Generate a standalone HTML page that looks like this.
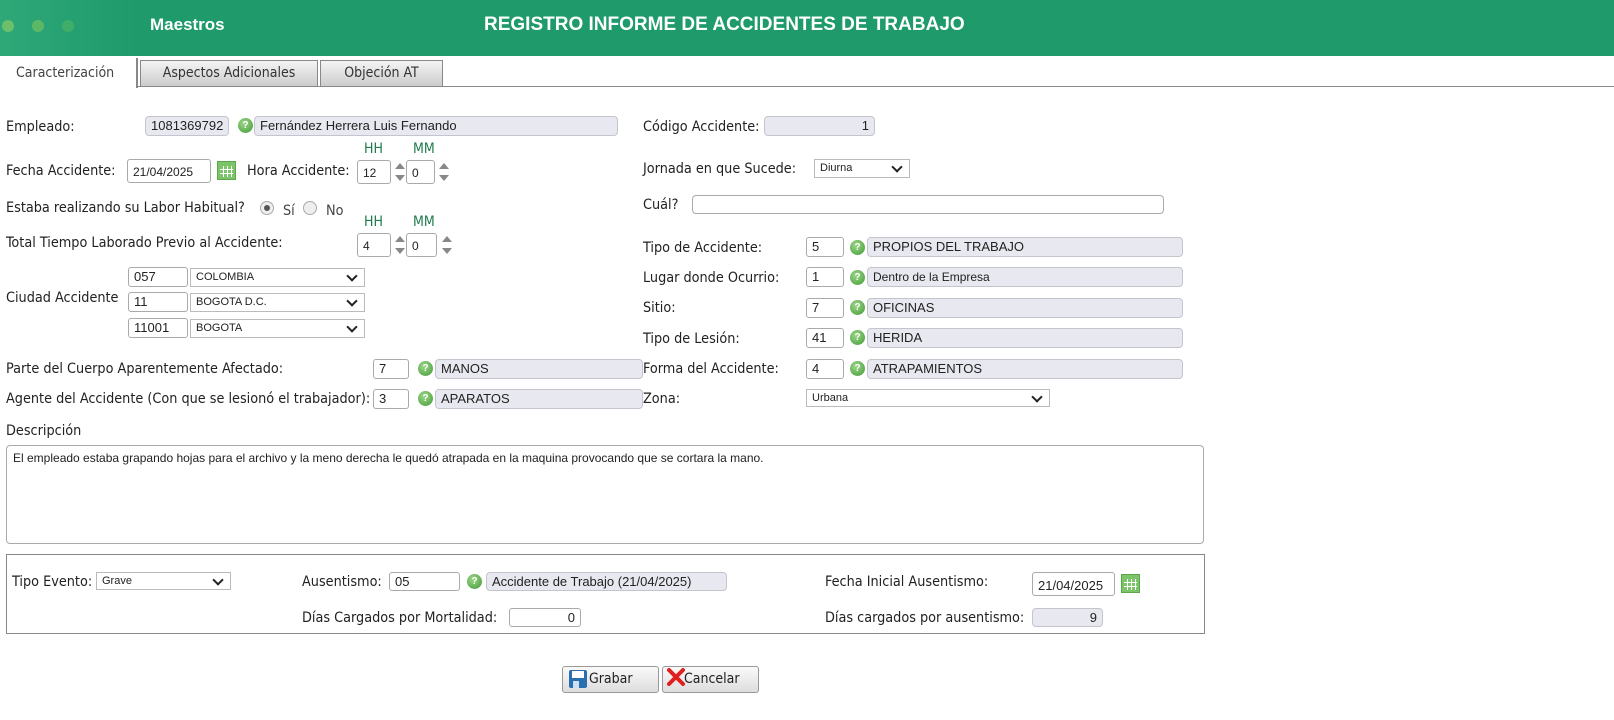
<!DOCTYPE html>
<html><head><meta charset="utf-8"><style>
*{box-sizing:border-box}
body{margin:0;width:1614px;height:720px;background:#fff;font-family:"DejaVu Sans Condensed","Liberation Sans",sans-serif;font-size:14px;color:#222;position:relative;overflow:hidden}
.a{position:absolute;white-space:nowrap}
.l{position:absolute;white-space:nowrap;font-size:14.3px;line-height:16px;transform:translateY(-7px);z-index:2}
.i{position:absolute;border:1px solid #aaa;background:#fff;font-family:"Liberation Sans",sans-serif;font-size:12px;padding:3px 5px;line-height:14px;border-radius:3px}
.r{position:absolute;border:1px solid #c4c4cc;background:#e8e8f0;font-family:"Liberation Sans",sans-serif;font-size:13px;padding:1px 5px;line-height:16px;border-radius:4px}
.s{position:absolute;border:1px solid #bbb;background:#fff;font-family:"Liberation Sans",sans-serif;font-size:11px;padding:2px 5px;line-height:13px}
.s:after{content:"";position:absolute;right:8px;top:3px;width:6px;height:6px;border-right:2px solid #222;border-bottom:2px solid #222;transform:rotate(45deg)}
.h{position:absolute;width:15px;height:15px;border-radius:50%;background:radial-gradient(circle at 40% 35%,#9ed68a,#3f9a34);color:#fff;font:bold 10px "Liberation Sans",sans-serif;text-align:center;line-height:15px}
.c{position:absolute;width:19px;height:19px;border:1px solid #5aa84a;background:#7cc46a}
.c:before{content:"";position:absolute;left:2px;top:4px;width:13px;height:11px;background:repeating-linear-gradient(90deg,transparent 0 3px,#fff 3px 4px),repeating-linear-gradient(0deg,transparent 0 3px,#fff 3px 4px)}
.sp{position:absolute;width:10px;height:22px}
.sp:before{content:"";position:absolute;left:0;top:2px;border:5px solid transparent;border-bottom:6px solid #888;border-top:0}
.sp:after{content:"";position:absolute;left:0;bottom:2px;border:5px solid transparent;border-top:6px solid #888;border-bottom:0}
.g{position:absolute;color:#1e7a4c;font-size:14px}
.rad{position:absolute;width:14px;height:14px;border-radius:50%;border:1px solid #aaa;background:#eee}
.btn{position:absolute;height:27px;border:1px solid #999;border-radius:3px;background:linear-gradient(#fafafa,#ddd);font-size:14px;line-height:25px}
</style></head><body>
<div class="a" style="left:0;top:0;width:1614px;height:56px;background:#1e9a6b"></div>
<div class="a" style="left:0;top:0;width:140px;height:56px;background:linear-gradient(90deg,#2fa878,#1e9a6b)"></div>
<div class="a" style="left:2px;top:20px;width:12px;height:12px;border-radius:50%;background:#6cc06a"></div>
<div class="a" style="left:32px;top:20px;width:12px;height:12px;border-radius:50%;background:#5cb865"></div>
<div class="a" style="left:62px;top:20px;width:12px;height:12px;border-radius:50%;background:#3fae68"></div>
<div class="a" style="left:150px;top:15px;color:#fff;font:bold 17px 'Liberation Sans',sans-serif">Maestros</div>
<div class="a" style="left:484px;top:14px;color:#fff;font:bold 19px 'Liberation Sans',sans-serif">REGISTRO INFORME DE ACCIDENTES DE TRABAJO</div>
<div class="a" style="left:0;top:86px;width:1614px;height:1px;background:#888"></div>
<div class="a" style="left:0;top:58px;width:138px;height:30px;background:#fff;border-right:2px solid #888;padding:7px 16px;color:#444">Caracterización</div>
<div class="a" style="left:140px;top:60px;width:178px;height:27px;border:1px solid #888;background:linear-gradient(#f4f4f4,#ccc);text-align:center;line-height:24px;color:#333">Aspectos Adicionales</div>
<div class="a" style="left:320px;top:60px;width:123px;height:27px;border:1px solid #888;background:linear-gradient(#f4f4f4,#ccc);text-align:center;line-height:24px;color:#333">Objeción AT</div>

<div class="l" style="left:6px;top:126px">Empleado:</div>
<div class="r" style="left:145px;top:116px;width:84px;height:20px">1081369792</div>
<div class="h" style="left:238px;top:118px">?</div>
<div class="r" style="left:254px;top:116px;width:364px;height:20px">Fernández Herrera Luis Fernando</div>
<div class="l" style="left:643px;top:126px">Código Accidente:</div>
<div class="r" style="left:764px;top:116px;width:111px;height:20px;text-align:right">1</div>

<div class="l" style="left:6px;top:170px">Fecha Accidente:</div>
<div class="i" style="left:127px;top:159px;width:84px;height:24px;padding-top:5px">21/04/2025</div>
<div class="c" style="left:217px;top:161px"></div>
<div class="l" style="left:247px;top:170px">Hora Accidente:</div>
<div class="g" style="left:364px;top:141px">HH</div><div class="g" style="left:413px;top:141px">MM</div>
<div class="i" style="left:357px;top:160px;width:34px;height:24px;padding-top:5px">12</div>
<div class="sp" style="left:395px;top:161px"></div>
<div class="i" style="left:406px;top:160px;width:29px;height:24px;padding-top:5px">0</div>
<div class="sp" style="left:439px;top:161px"></div>
<div class="l" style="left:643px;top:168px">Jornada en que Sucede:</div>
<div class="s" style="left:814px;top:159px;width:96px;height:19px">Diurna</div>

<div class="l" style="left:6px;top:207px">Estaba realizando su Labor Habitual?</div>
<div class="rad" style="left:260px;top:201px"></div><div class="a" style="left:264px;top:205px;width:6px;height:6px;border-radius:50%;background:#555"></div>
<div class="l" style="left:283px;top:210px;color:#444">Sí</div>
<div class="rad" style="left:303px;top:201px"></div>
<div class="l" style="left:326px;top:210px;color:#444">No</div>
<div class="l" style="left:643px;top:204px">Cuál?</div>
<div class="i" style="left:692px;top:195px;width:472px;height:19px;border-radius:4px"></div>

<div class="g" style="left:364px;top:214px">HH</div><div class="g" style="left:413px;top:214px">MM</div>
<div class="l" style="left:6px;top:242px">Total Tiempo Laborado Previo al Accidente:</div>
<div class="i" style="left:357px;top:233px;width:34px;height:24px;padding-top:5px">4</div>
<div class="sp" style="left:395px;top:234px"></div>
<div class="i" style="left:406px;top:233px;width:31px;height:24px;padding-top:5px">0</div>
<div class="sp" style="left:442px;top:234px"></div>

<div class="l" style="left:6px;top:297px">Ciudad Accidente</div>
<div class="i" style="left:128px;top:267px;width:60px;height:20px;padding-top:2px;font-size:13px">057</div>
<div class="s" style="left:190px;top:268px;width:175px;height:19px">COLOMBIA</div>
<div class="i" style="left:128px;top:292px;width:60px;height:20px;padding-top:2px;font-size:13px">11</div>
<div class="s" style="left:190px;top:293px;width:175px;height:19px">BOGOTA D.C.</div>
<div class="i" style="left:128px;top:318px;width:60px;height:20px;padding-top:2px;font-size:13px">11001</div>
<div class="s" style="left:190px;top:319px;width:175px;height:19px">BOGOTA</div>

<div class="l" style="left:643px;top:247px">Tipo de Accidente:</div>
<div class="i" style="left:806px;top:237px;width:38px;height:20px;padding-top:2px;font-size:13px">5</div>
<div class="h" style="left:850px;top:240px">?</div>
<div class="r" style="left:867px;top:237px;width:316px;height:20px">PROPIOS DEL TRABAJO</div>
<div class="l" style="left:643px;top:277px">Lugar donde Ocurrio:</div>
<div class="i" style="left:806px;top:267px;width:38px;height:20px;padding-top:2px;font-size:13px">1</div>
<div class="h" style="left:850px;top:270px">?</div>
<div class="r" style="left:867px;top:267px;width:316px;height:20px;font-size:12px">Dentro de la Empresa</div>
<div class="l" style="left:643px;top:307px">Sitio:</div>
<div class="i" style="left:806px;top:298px;width:38px;height:20px;padding-top:2px;font-size:13px">7</div>
<div class="h" style="left:850px;top:300px">?</div>
<div class="r" style="left:867px;top:298px;width:316px;height:20px">OFICINAS</div>
<div class="l" style="left:643px;top:338px">Tipo de Lesión:</div>
<div class="i" style="left:806px;top:328px;width:38px;height:20px;padding-top:2px;font-size:13px">41</div>
<div class="h" style="left:850px;top:330px">?</div>
<div class="r" style="left:867px;top:328px;width:316px;height:20px">HERIDA</div>
<div class="l" style="left:643px;top:368px">Forma del Accidente:</div>
<div class="i" style="left:806px;top:359px;width:38px;height:20px;padding-top:2px;font-size:13px">4</div>
<div class="h" style="left:850px;top:361px">?</div>
<div class="r" style="left:867px;top:359px;width:316px;height:20px">ATRAPAMIENTOS</div>
<div class="l" style="left:643px;top:398px">Zona:</div>
<div class="s" style="left:806px;top:389px;width:244px;height:18px">Urbana</div>

<div class="l" style="left:6px;top:368px">Parte del Cuerpo Aparentemente Afectado:</div>
<div class="i" style="left:373px;top:359px;width:36px;height:20px;padding-top:2px;font-size:13px">7</div>
<div class="h" style="left:418px;top:361px">?</div>
<div class="r" style="left:435px;top:359px;width:208px;height:20px">MANOS</div>
<div class="l" style="left:6px;top:398px">Agente del Accidente (Con que se lesionó el trabajador):</div>
<div class="i" style="left:373px;top:389px;width:36px;height:20px;padding-top:2px;font-size:13px">3</div>
<div class="h" style="left:418px;top:391px">?</div>
<div class="r" style="left:435px;top:389px;width:208px;height:20px">APARATOS</div>

<div class="l" style="left:6px;top:430px">Descripción</div>
<div class="i" style="left:6px;top:445px;width:1198px;height:99px;border-radius:4px;padding:5px 6px">El empleado estaba grapando hojas para el archivo y la meno derecha le quedó atrapada en la maquina provocando que se cortara la mano.</div>

<div class="a" style="left:6px;top:554px;width:1199px;height:80px;border:1px solid #888"></div>
<div class="l" style="left:12px;top:581px">Tipo Evento:</div>
<div class="s" style="left:96px;top:572px;width:135px;height:18px">Grave</div>
<div class="l" style="left:302px;top:581px">Ausentismo:</div>
<div class="i" style="left:389px;top:572px;width:71px;height:19px;padding-top:2px;font-size:13px">05</div>
<div class="h" style="left:467px;top:574px">?</div>
<div class="r" style="left:486px;top:572px;width:241px;height:19px;font-size:13px">Accidente de Trabajo (21/04/2025)</div>
<div class="l" style="left:825px;top:581px">Fecha Inicial Ausentismo:</div>
<div class="i" style="left:1032px;top:572px;width:83px;height:24px;padding-top:6px;font-size:13px">21/04/2025</div>
<div class="c" style="left:1121px;top:574px"></div>
<div class="l" style="left:302px;top:617px">Días Cargados por Mortalidad:</div>
<div class="i" style="left:509px;top:608px;width:72px;height:19px;padding-top:2px;font-size:13px;text-align:right">0</div>
<div class="l" style="left:825px;top:617px">Días cargados por ausentismo:</div>
<div class="r" style="left:1032px;top:608px;width:71px;height:19px;text-align:right">9</div>

<div class="btn" style="left:562px;top:666px;width:97px;padding-left:26px">Grabar</div>
<svg class="a" style="left:568px;top:669px" width="20" height="20" viewBox="0 0 20 20"><rect x="1" y="1" width="18" height="18" rx="2" fill="#2a6fb0"/><rect x="4" y="2" width="12" height="7" fill="#fff"/><rect x="5" y="12" width="6" height="7" fill="#cfe0f0"/></svg>
<div class="btn" style="left:662px;top:666px;width:97px;padding-left:21px">Cancelar</div>
<svg class="a" style="left:667px;top:668px" width="18" height="18" viewBox="0 0 18 18"><path d="M2 2L16 16M16 2L2 16" stroke="#e02020" stroke-width="4" stroke-linecap="round"/></svg>
</body></html>
